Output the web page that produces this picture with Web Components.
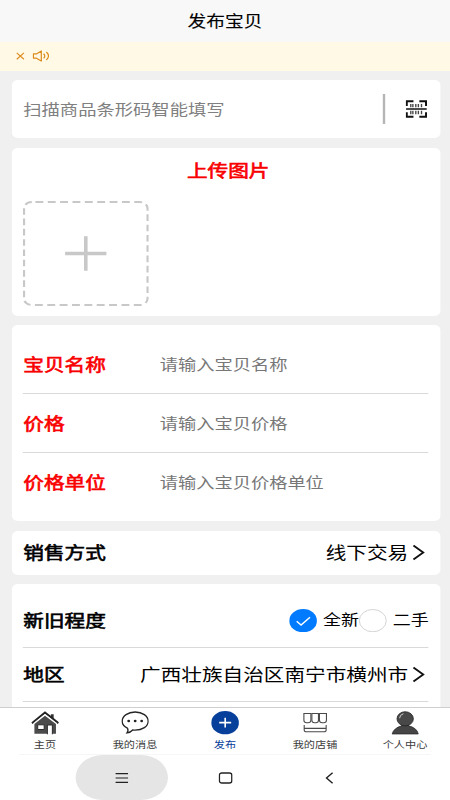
<!DOCTYPE html>
<html lang="zh-CN">
<head>
<meta charset="utf-8">
<title>发布宝贝</title>
<style>
html,body{margin:0;padding:0;background:#fff;width:450px;height:800px;overflow:hidden}
</style>
</head>
<body>
<publish-app></publish-app>
<script>
const define = (name, html) => {
  customElements.define(name, class extends HTMLElement {
    constructor() {
      super();
      const t = document.createElement('template');
      t.innerHTML = html;
      this.attachShadow({mode: 'open'}).appendChild(t.content.cloneNode(true));
    }
  });
};

/* Icons are drawn on non-uniform view boxes because the page is widened horizontally. */
const glyphs = {
  close: [8, 8, '0 0 10 8', '<path d="M1.2 .9 8.7 7.2M8.7 .9 1.2 7.2" fill="none" stroke="#dd8a1c" stroke-width="1.2"/>'],
  sound: [15, 12, '0 0 18 12', '<g fill="none" stroke="#dd8a1c" stroke-width="1.2"><path d="M1 3.9H4L8.9 1V11L4 8.2H1Z" stroke-linejoin="round"/><path d="M11.2 3.7Q13.6 6 11.2 8.3M14 2Q18.2 6 14 10"/></g>'],
  scan: [18, 18, '0 0 22 18', '<g fill="none" stroke="#111"><path d="M1.2 6V1.2H8M14 1.2H20.8V6M1.2 12.2V16.8H8M14 16.8H20.8V12.2" stroke-width="2"/><path d="M0.5 9H21.5" stroke-width="1.5"/><path d="M5.3 3.9V7.2M7.4 3.9V7.2M10.4 3.9V7.2M13 3.9V7.2M16.2 3.9V7.2M5.3 10.8V14.3M7.4 10.8V14.3M10.4 10.8V14.3M13 10.8V14.3M16.2 10.8V14.3" stroke-width="1.4" stroke="#444"/></g>'],
  plus: [35, 35, '0 0 42 35', '<path d="M0.3 17.5H41.7M21 .3V34.7" stroke="#c8c8c8" stroke-width="3.6" fill="none"/>'],
  arrow: [12, 17, '0 0 14 17', '<path d="M1.8 1.6 11.3 8.5 1.8 15.4" fill="none" stroke="#111" stroke-width="1.8"/>'],
  check: [23.3, 23.3, '0 0 28 23.3', '<ellipse cx="14" cy="11.65" rx="14" ry="11.65" fill="#007aff"/><path d="M7.5 12.2 11.9 16 20.8 8.2" fill="none" stroke="#fff" stroke-width="1.5"/>'],
  circle: [23.3, 23.3, '0 0 28 23.3', '<ellipse cx="14" cy="11.65" rx="13.5" ry="11.15" fill="#fff" stroke="#d4d4d4"/>'],
  home: [23.3, 23.3, '0 0 28 23.3', '<path d="M3.2 13 13.8 4.7 24.8 13V22.8H3.2Z" fill="#4b4b4b"/><path d="M19.7 3.2H22.5V9L19.7 6.7Z" fill="#333"/><path d="M.7 12.2 13.8 1.5 27.3 12.2" fill="none" stroke="#242424" stroke-width="2.1"/><path d="M2.2 12.5 13.8 3.4 25.8 12.5" fill="none" stroke="#fff" stroke-width=".6"/><path d="M6.5 13.8H13V18.5H6.5Z" fill="#fff" stroke="#292929"/><path d="M16.2 23.3V14H21.2V23.3" fill="#fff" stroke="#292929"/>'],
  chat: [23.3, 23.3, '0 0 28 23.3', '<path d="M6.2 17.2C2.8 15.5 1 13 1 10.2 1 5 6.8 1 14 1S27 5 27 10.2 21.2 19.2 14 19.2Q12.5 19.2 11.5 19Q9.5 21.4 5.8 21.9Q7.6 19.4 6.2 17.2Z" fill="#fff" stroke="#242424" stroke-width="1.3"/><g fill="#222"><ellipse cx="7.5" cy="10" rx="1.4" ry="1.2"/><ellipse cx="14" cy="10" rx="1.4" ry="1.2"/><ellipse cx="20.5" cy="10" rx="1.4" ry="1.2"/></g>'],
  add: [23.3, 23.3, '0 0 28 23.3', '<ellipse cx="14" cy="11.65" rx="14" ry="11.65" fill="#07409a"/><path d="M8 11.6H20M14 6.7V16.6" stroke="#fff" stroke-width="1.6"/>'],
  shop: [23.3, 23.3, '0 0 28 23.3', '<g fill="none" stroke="#4a4a4a" stroke-width="1.1"><path d="M2.7 2.5H9.7V9.3Q9.7 11.7 6.9 11.7H5.5Q2.7 11.7 2.7 9.3Z"/><path d="M10.7 2.5H17.3V9.3Q17.3 11.7 14.7 11.7H13.3Q10.7 11.7 10.7 9.3Z"/><path d="M18.3 2.5H25.3V9.3Q25.3 11.7 22.5 11.7H21.1Q18.3 11.7 18.3 9.3Z"/><path d="M3 14V18.9Q3 20.8 5.2 20.8H22.8Q25 20.8 25 18.9V14M3.2 17.4H24.8"/></g>'],
  user: [23.3, 23.3, '0 0 28 23.3', '<path d="M10.5 12H17.5V14.8Q26 17 27.2 23H.9Q2.5 17 10.5 14.8Z" fill="#454545" stroke="#222" stroke-width=".7"/><ellipse cx="14" cy="7.8" rx="8.2" ry="7.1" fill="#484848" stroke="#222" stroke-width=".8"/><path d="M8.4 7.2Q8.6 3.8 12.2 2.7" fill="none" stroke="#ddd" stroke-width=".9"/>'],
  menu: [11, 12, '0 0 13 12', '<path d="M.3 1.7H12.7M.3 6H12.7M.3 10.4H12.7" stroke="#222" stroke-width="1.2"/>'],
  square: [12, 12, '0 0 14 12', '<rect x="1" y="1" width="12" height="10" rx="2.4" ry="2" fill="none" stroke="#222" stroke-width="1.3"/>'],
  back: [7, 12, '0 0 8.4 12', '<path d="M7.4 .8 1.3 6 7.4 11.2" fill="none" stroke="#222" stroke-width="1.4"/>']
};
customElements.define('app-icon', class extends HTMLElement {
  connectedCallback() {
    if (this.shadowRoot) return;
    const [w, h, box, body] = glyphs[this.getAttribute('name')];
    this.attachShadow({mode: 'open'}).innerHTML =
      `<style>:host{display:block;flex:none}svg{display:block}</style><svg width="${w}" height="${h}" viewBox="${box}" preserveAspectRatio="none">${body}</svg>`;
  }
});

define('page-header', `<style>:host{display:flex;height:41.7px;flex:none;align-items:center;justify-content:center;background:#f8f8f8;color:#000;font-size:15.6px;-webkit-text-stroke:.1px}</style><span><slot></slot></span>`);

define('notice-bar', `<style>:host{display:flex;height:29px;flex:none;align-items:center;gap:5.8px;padding-left:13.2px;background:#fff9e6;box-sizing:border-box;padding-bottom:1px}</style><app-icon name="close"></app-icon><app-icon name="sound"></app-icon>`);

define('form-card', `<style>:host{display:block;background:#fff;border-radius:5px;padding:9.7px;box-sizing:border-box;flex:none}</style><slot></slot>`);

define('scan-field', `<style>:host{display:flex;align-items:center;height:38.6px;color:#808080;font-size:15.25px}span{flex:1;margin-top:-2px}i{width:1.7px;height:30px;background:#b5b5b5;margin-right:17px}app-icon{margin-right:1.6px}</style><span><slot></slot></span><i></i><app-icon name="scan"></app-icon>`);

define('upload-box', `<style>:host{display:block}h2{margin:0;padding-left:3.6px;height:26px;line-height:26px;font-size:17.2px;font-weight:400;-webkit-text-stroke:.6px;color:#f90000;text-align:center}
.drop{width:105px;height:105px;margin-top:18px;display:grid;place-items:center}.edge{grid-area:1/1;display:block}app-icon{grid-area:1/1}</style>
<h2><slot></slot></h2><div class="drop"><svg class="edge" width="105" height="105" viewBox="0 0 105 105"><rect x="1" y="1" width="103" height="103" rx="6.5" fill="none" stroke="#c8c8c8" stroke-width="1.9" stroke-dasharray="6.6 3.7" stroke-dashoffset="-3"/></svg><app-icon name="plus"></app-icon></div>`);

define('form-row', `<style>:host{display:flex;align-items:center;height:var(--row,59px);box-sizing:border-box;border-bottom:1px solid #d9d9d9;font-size:17.2px;color:#000}
:host([last]){border-bottom-color:transparent}
b{font-weight:400;-webkit-text-stroke:.6px;flex:none}:host([required]) b{color:#f90000}
.value{flex:1;display:flex;align-items:center;justify-content:flex-end;gap:2.6px}
:host([required]) b{width:113.8px}:host([required]) .value{justify-content:flex-start;color:#777;font-size:15.2px}
app-icon{display:none;margin-right:2.6px}:host([link]) app-icon{display:block}</style>
<b><slot name="label"></slot></b><div class="value"><slot></slot><app-icon name="arrow"></app-icon></div>`);

define('condition-choice', `<style>:host{display:flex;align-items:center;font-size:15px}.t{margin:-3px 0 0 4.8px}</style><slot name="mark"></slot><span class="t"><slot></slot></span>`);

define('tab-item', `<style>:host{display:flex;flex:1;flex-direction:column;align-items:center;color:#3c3c3c;font-size:9.3px;line-height:14px;gap:2.3px}:host([active]){color:#07409a}</style><slot name="icon"></slot><span><slot></slot></span>`);

define('tab-bar', `<style>:host{display:flex;height:46.5px;flex:none;box-sizing:border-box;border-top:1.3px solid #cfcfcf;background:#fff;padding-top:3.3px}</style><slot></slot>`);

define('system-nav', `<style>:host{display:flex;flex-direction:column;flex:none;background:#fff}
.rule{height:1.5px;margin:0 16px;background:#f6f6f6}
nav{display:flex;justify-content:center;gap:8.8px;padding-left:.8px}
nav div{width:77.4px;height:45px;border-radius:23px;display:grid;place-items:center}nav .on{background:#e5e5e5}</style>
<div class="rule"></div><nav><div class="on"><app-icon name="menu"></app-icon></div><div><app-icon name="square"></app-icon></div><div><app-icon name="back"></app-icon></div></nav>`);

define('publish-app', `<style>
:host{display:flex;flex-direction:column;width:375px;height:800px;transform:scaleX(1.2);transform-origin:0 0;background:#f0f0f0;font-family:"Noto Sans CJK SC",sans-serif;line-height:1.4;overflow:hidden}
main{flex:1;min-height:0;overflow:hidden;display:flex;flex-direction:column;gap:9.6px;padding:9.5px 8px 0 9.7px;box-sizing:border-box}
.scan{height:58px}.upload{height:168px}.names{height:196px}.sale{height:43.6px;padding-top:0;padding-bottom:0;--row:43.6px}.more{height:190px;--row:54px}
.choices{display:flex}
</style>
<page-header>发布宝贝</page-header>
<notice-bar></notice-bar>
<main>
<form-card class="scan"><scan-field>扫描商品条形码智能填写</scan-field></form-card>
<form-card class="upload"><upload-box>上传图片</upload-box></form-card>
<form-card class="names">
<form-row required><span slot="label">宝贝名称</span>请输入宝贝名称</form-row>
<form-row required><span slot="label">价格</span>请输入宝贝价格</form-row>
<form-row required last><span slot="label">价格单位</span>请输入宝贝价格单位</form-row>
</form-card>
<form-card class="sale"><form-row link last><span slot="label">销售方式</span>线下交易</form-row></form-card>
<form-card class="more">
<form-row><span slot="label">新旧程度</span><span class="choices"><condition-choice><app-icon slot="mark" name="check"></app-icon>全新</condition-choice><condition-choice><app-icon slot="mark" name="circle"></app-icon>二手</condition-choice></span></form-row>
<form-row link><span slot="label">地区</span>广西壮族自治区南宁市横州市</form-row>
</form-card>
</main>
<tab-bar>
<tab-item><app-icon slot="icon" name="home"></app-icon>主页</tab-item>
<tab-item><app-icon slot="icon" name="chat"></app-icon>我的消息</tab-item>
<tab-item active><app-icon slot="icon" name="add"></app-icon>发布</tab-item>
<tab-item><app-icon slot="icon" name="shop"></app-icon>我的店铺</tab-item>
<tab-item><app-icon slot="icon" name="user"></app-icon>个人中心</tab-item>
</tab-bar>
<system-nav></system-nav>`);
</script>
</body>
</html>
